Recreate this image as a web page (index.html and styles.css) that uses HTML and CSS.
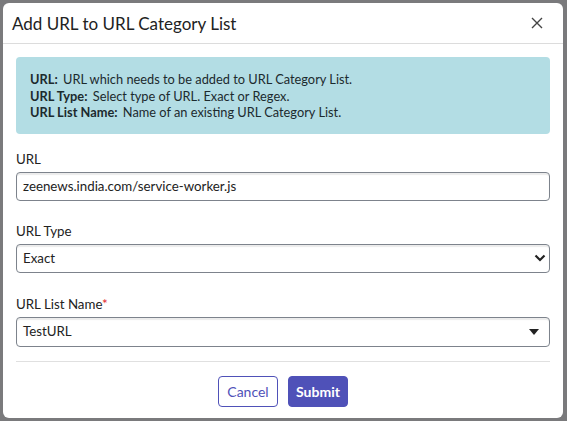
FILE: index.html
```html
<!DOCTYPE html>
<html lang="en">
<head>
    <meta charset="UTF-8">
    <meta name="viewport" content="width=device-width, initial-scale=1.0">
    <title>Add URL to URL Category List</title>
    <link rel="stylesheet" href="styles.css">
</head>
<body>
    <div class="backdrop">
        <div class="modal">
            <div class="modal-header">
                <h2>Add URL to URL Category List</h2>
                <button class="close" title="Close">
                    <svg width="12" height="12" viewBox="0 0 12 12"><path d="M1 1L11 11M11 1L1 11" stroke="#444" stroke-width="1.4" fill="none"/></svg>
                </button>
            </div>
            <div class="modal-body">
                <div class="info">
                    <div><b>URL:</b> URL which needs to be added to URL Category List.</div>
                    <div><b>URL Type:</b> Select type of URL. Exact or Regex.</div>
                    <div><b>URL List Name:</b> Name of an existing URL Category List.</div>
                </div>

                <div class="field">
                    <label>URL</label>
                    <div class="input">zeenews.india.com/service-worker.js</div>
                </div>

                <div class="field">
                    <label>URL Type</label>
                    <div class="input select">
                        <span>Exact</span>
                        <svg width="12" height="8" viewBox="0 0 12 8"><path d="M1.5 1.5L6 6L10.5 1.5" stroke="#222" stroke-width="2.2" fill="none"/></svg>
                    </div>
                </div>

                <div class="field">
                    <label>URL List Name<span class="req">*</span></label>
                    <div class="input select combo">
                        <span>TestURL</span>
                        <svg width="10" height="6" viewBox="0 0 10 6"><path d="M0 0H10L5 6Z" fill="#222"/></svg>
                    </div>
                </div>

                <div class="actions">
                    <button class="btn btn-outline">Cancel</button>
                    <button class="btn btn-primary">Submit</button>
                </div>
            </div>
        </div>
    </div>
</body>
</html>
```

FILE: styles.css
```css
body { margin: 0; font-family: Lato, "Open Sans", sans-serif; color: #222; background: #7a7a7c; }
.backdrop { width: 567px; height: 421px; padding: 3px 0 0 3px; box-sizing: border-box; }
.modal { width: 560px; height: 415px; background: #fff; border-radius: 6px; overflow: hidden; }

.modal-header { display: flex; align-items: center; justify-content: space-between; height: 40px; padding: 0 20px 0 9px; border-bottom: 1px solid #dcdcdc; }
.modal-header h2 { margin: 0; font-size: 17px; font-weight: normal; color: #222; }
.close { border: none; background: none; padding: 0; display: flex; cursor: pointer; }

.modal-body { padding: 13px 13px 0 13px; }
.info { background: #b3dde4; border-radius: 4px; padding: 14px 14px 13px 14px; font-size: 12.8px; line-height: 16.5px; color: #1c2a2e; }
.info b { margin-right: 2px; }

.field { margin-top: 15px; }
.field + .field { margin-top: 20px; }
.field + .field + .field { margin-top: 21px; }
.field label { display: block; font-size: 13.3px; line-height: 20px; margin-bottom: 3px; }
.req { color: #e2222b; }

.input { height: 27px; border: 1px solid #7d838c; border-radius: 4px; box-shadow: inset 0 2px 1px #ececec; padding: 0 6px; font-size: 13.3px; line-height: 27px; color: #222; }
.select { display: flex; align-items: center; justify-content: space-between; padding-right: 3px; }
.combo { height: 28px; padding-right: 10px; }

.actions { display: flex; justify-content: center; gap: 10px; margin-top: 14px; padding-top: 14px; border-top: 1px solid #e0e0e0; }
.btn { height: 31px; width: 60px; border-radius: 4px; font-family: Lato, "Open Sans", sans-serif; font-size: 14px; cursor: pointer; }
.btn-outline { background: #fff; border: 1px solid #4f51b8; color: #4f51b8; }
.btn-primary { background: #4f51b8; border: 1px solid #4f51b8; color: #fff; font-weight: bold; }
```
